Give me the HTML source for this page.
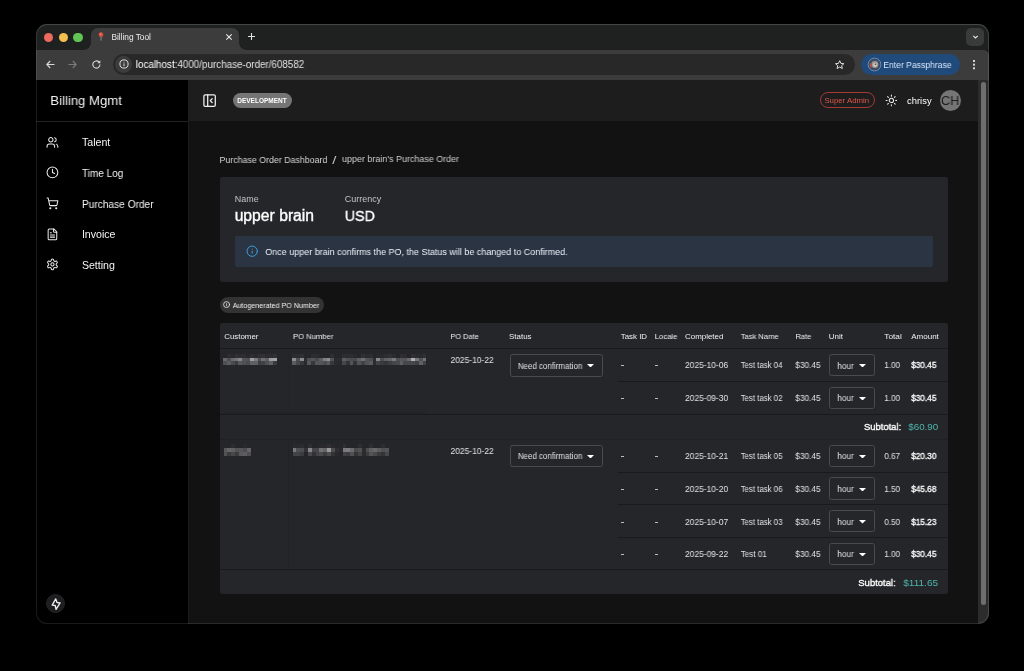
<!DOCTYPE html>
<html><head><meta charset="utf-8"><title>Billing Tool</title>
<style>
*{box-sizing:border-box;margin:0;padding:0}
html,body{width:1024px;height:671px;background:#000;overflow:hidden;font-family:"Liberation Sans",sans-serif;color:#fff}
.abs{position:absolute}
#win{position:absolute;left:35.5px;top:23.8px;width:953.5px;height:600.4px;border-radius:11px;background:#121212;overflow:hidden}
#winborder{position:absolute;left:35.5px;top:23.8px;width:953.5px;height:600.4px;border-radius:11px;border:1.3px solid rgba(255,255,255,.1);border-top-color:rgba(255,255,255,.17);border-right-color:rgba(255,255,255,.14);pointer-events:none}
#tab{position:absolute;left:55.5px;top:4.2px;width:148px;height:22px;background:#3c3c3c;border-radius:7px 7px 0 0}
#tab:before,#tab:after{content:"";position:absolute;bottom:0;width:7px;height:7px;background:radial-gradient(circle at 0 0,transparent 6.5px,#3c3c3c 7px)}
#tab:before{left:-7px}
#tab:after{right:-7px;background:radial-gradient(circle at 100% 0,transparent 6.5px,#3c3c3c 7px)}
.t{position:absolute;white-space:nowrap;line-height:1;transform-origin:0 0;will-change:transform}
</style></head><body>
<div id="win">

<div class="abs" style="left:-0.5px;top:-0.8px;width:955px;height:27px;background:#1f2120;"></div>
<div class="abs" style="left:-0.5px;top:26.2px;width:954px;height:29.6px;background:#3c3c3c;border-radius:0 5px 0 0"></div>
<div class="abs" style="left:8.5px;top:8.85px;width:9.3px;height:9.3px;background:#ed6a5e;border-radius:50%"></div>
<div class="abs" style="left:23.15px;top:8.85px;width:9.3px;height:9.3px;background:#f4bf4f;border-radius:50%"></div>
<div class="abs" style="left:37.75px;top:8.85px;width:9.3px;height:9.3px;background:#61c554;border-radius:50%"></div>
<div id="tab"></div>
<svg class="abs" style="left:62.3px;top:8.6px" width="6" height="9" viewBox="0 0 6 9"><rect x="2.6" y="4" width="0.9" height="4.6" fill="#8a9aa3"/><circle cx="3" cy="2.7" r="2.35" fill="#d9513e"/><circle cx="2.4" cy="2.1" r="0.8" fill="#ee8a78"/></svg>
<svg class="abs" style="left:189.5px;top:9.2px" width="8" height="8" viewBox="0 0 8 8"><path d="M1.3 1.3 L6.7 6.7 M6.7 1.3 L1.3 6.7" stroke="#e8e8e8" stroke-width="1.1" fill="none"/></svg>
<svg class="abs" style="left:211.5px;top:8.2px" width="9" height="9" viewBox="0 0 9 9"><path d="M4.5 1 V8 M1 4.5 H8" stroke="#e0e0e0" stroke-width="1.1" fill="none"/></svg>
<div class="abs" style="left:930.5px;top:4.2px;width:18.0px;height:18px;background:#3a3a3a;border-radius:5px"></div>
<svg class="abs" style="left:935.0px;top:9.2px" width="9" height="8" viewBox="0 0 9 8"><path d="M2.3 2.8 L4.5 5.0 L6.7 2.8" stroke="#e8e8e8" stroke-width="1.15" fill="none"/></svg>
<div class="abs" style="left:77.5px;top:30.2px;width:742px;height:21px;background:#282828;border-radius:11px"></div>
<svg class="abs" style="left:9.5px;top:35.2px" width="11" height="11" viewBox="0 0 11 11"><path d="M9.5 5.5 H2 M5.2 2 L1.8 5.5 L5.2 9" stroke="#d8d8d8" stroke-width="1.1" fill="none"/></svg>
<svg class="abs" style="left:31.5px;top:35.2px" width="11" height="11" viewBox="0 0 11 11"><path d="M1.5 5.5 H9 M5.8 2 L9.2 5.5 L5.8 9" stroke="#7c7c7c" stroke-width="1.1" fill="none"/></svg>
<svg class="abs" style="left:55.1px;top:35.3px" width="11" height="11" viewBox="0 0 11 11"><path d="M9 5.5 A3.6 3.6 0 1 1 7.9 2.9" stroke="#d8d8d8" stroke-width="1.1" fill="none"/><path d="M9.3 1.3 V4.2 H6.4 Z" fill="#d8d8d8"/></svg>
<div class="abs" style="left:79.5px;top:32.2px;width:17px;height:17px;background:#3c3c3c;border-radius:50%"></div>
<svg class="abs" style="left:83.0px;top:35.7px" width="10" height="10" viewBox="0 0 10 10"><circle cx="5" cy="5" r="4.1" stroke="#e8e8e8" stroke-width="0.95" fill="none"/><path d="M5 4.4 V7.2 M5 2.8 V3.6" stroke="#e8e8e8" stroke-width="0.9"/></svg>
<svg class="abs" style="left:798.9px;top:35.2px" width="11.4" height="11.4" viewBox="0 0 24 24"><path d="M12 3.6 L14.6 9.3 L20.8 9.9 L16.1 14 L17.5 20.1 L12 16.9 L6.5 20.1 L7.9 14 L3.2 9.9 L9.4 9.3 Z" stroke="#e8e8e8" stroke-width="2" fill="none" stroke-linejoin="round"/></svg>
<div class="abs" style="left:825.5px;top:29.9px;width:98.8px;height:21.6px;background:#1f4a7a;border-radius:11px"></div>
<svg class="abs" style="left:831.0px;top:33.2px" width="15" height="15" viewBox="-7.5 -7.5 15 15"><circle r="6.4" fill="none" stroke="#8ea6c6" stroke-width="0.7"/><circle r="5.2" fill="#4a4d55"/><circle cx="0.4" cy="0" r="3.4" fill="#9a9a9c"/><circle cx="0.6" cy="0.3" r="1.9" fill="#d8d6d4"/><path d="M-4.6,-1.8 A5 5 0 0 0 -3.6,3.4 L-2.2,1.8 A3 3 0 0 1 -2.8,-1 Z" fill="#b4513f"/><circle cx="1" cy="-0.2" r="0.9" fill="#55585f"/></svg>
<div class="abs" style="left:937.4px;top:36.2px;width:2.2px;height:2px;background:#d4d4d4;box-shadow:0 3.65px 0 #d4d4d4,0 7.3px 0 #d4d4d4"></div>
<div class="abs" style="left:-0.5px;top:55.8px;width:955px;height:545.4px;background:#121212;"></div>
<div class="abs" style="left:-0.5px;top:55.8px;width:153.6px;height:545.4px;background:#000;border-right:1px solid #1c1c1c"></div>
<div class="abs" style="left:-0.5px;top:96.9px;width:153px;height:1.0px;background:#222222;"></div>
<div class="abs" style="left:153.1px;top:55.8px;width:789.4px;height:41.4px;background:#1d1d1d;"></div>
<div class="abs" style="left:942.1px;top:55.8px;width:12.4px;height:545.4px;background:#2c2c2c;"></div>
<div class="abs" style="left:945.5px;top:58.2px;width:5.2px;height:523.4px;background:#6e6e6e;border-radius:3px"></div>
<svg class="abs" style="left:10.600000000000001px;top:111.89999999999999px" width="12.9" height="12.9" viewBox="0 0 24 24" fill="none" stroke="#ececec" stroke-width="1.9" stroke-linecap="round" stroke-linejoin="round"><path d="M16 21v-2a4 4 0 0 0-4-4H6a4 4 0 0 0-4 4v2"/><circle cx="9" cy="7" r="4"/><path d="M22 21v-2a4 4 0 0 0-3-3.87"/><path d="M16 3.13a4 4 0 0 1 0 7.75"/></svg>
<svg class="abs" style="left:10.600000000000001px;top:142.6px" width="12.9" height="12.9" viewBox="0 0 24 24" fill="none" stroke="#ececec" stroke-width="1.9" stroke-linecap="round" stroke-linejoin="round"><circle cx="12" cy="12" r="10"/><polyline points="12 6 12 12 16 14"/></svg>
<svg class="abs" style="left:10.600000000000001px;top:173.2px" width="12.9" height="12.9" viewBox="0 0 24 24" fill="none" stroke="#ececec" stroke-width="1.9" stroke-linecap="round" stroke-linejoin="round"><circle cx="8" cy="21" r="1"/><circle cx="19" cy="21" r="1"/><path d="M2.05 2.05h2l2.66 12.42a2 2 0 0 0 2 1.58h9.78a2 2 0 0 0 1.95-1.57l1.65-7.43H5.12"/></svg>
<svg class="abs" style="left:10.600000000000001px;top:203.89999999999998px" width="12.9" height="12.9" viewBox="0 0 24 24" fill="none" stroke="#ececec" stroke-width="1.9" stroke-linecap="round" stroke-linejoin="round"><path d="M15 2H6a2 2 0 0 0-2 2v16a2 2 0 0 0 2 2h12a2 2 0 0 0 2-2V7Z"/><path d="M14 2v4a2 2 0 0 0 2 2h4"/><path d="M10 9H8"/><path d="M16 13H8"/><path d="M16 17H8"/></svg>
<svg class="abs" style="left:10.600000000000001px;top:234.5px" width="12.9" height="12.9" viewBox="0 0 24 24" fill="none" stroke="#ececec" stroke-width="1.9" stroke-linecap="round" stroke-linejoin="round"><path d="M12.22 2h-.44a2 2 0 0 0-2 2v.18a2 2 0 0 1-1 1.73l-.43.25a2 2 0 0 1-2 0l-.15-.08a2 2 0 0 0-2.73.73l-.22.38a2 2 0 0 0 .73 2.73l.15.1a2 2 0 0 1 1 1.72v.51a2 2 0 0 1-1 1.74l-.15.09a2 2 0 0 0-.73 2.73l.22.38a2 2 0 0 0 2.73.73l.15-.08a2 2 0 0 1 2 0l.43.25a2 2 0 0 1 1 1.73V20a2 2 0 0 0 2 2h.44a2 2 0 0 0 2-2v-.18a2 2 0 0 1 1-1.73l.43-.25a2 2 0 0 1 2 0l.15.08a2 2 0 0 0 2.73-.73l.22-.39a2 2 0 0 0-.73-2.73l-.15-.08a2 2 0 0 1-1-1.74v-.5a2 2 0 0 1 1-1.74l.15-.09a2 2 0 0 0 .73-2.73l-.22-.38a2 2 0 0 0-2.73-.73l-.15.08a2 2 0 0 1-2 0l-.43-.25a2 2 0 0 1-1-1.73V4a2 2 0 0 0-2-2z"/><circle cx="12" cy="12" r="3"/></svg>
<div class="abs" style="left:10.4px;top:570.2px;width:19.4px;height:19.4px;background:#1e1e20;border-radius:50%;border:1px solid #262628"></div>
<svg class="abs" style="left:13.100000000000001px;top:572.9000000000001px" width="14" height="14" viewBox="-7 -7 14 14" fill="none" stroke="#ececec" stroke-width="1.35" stroke-linejoin="round"><path d="M-0.25,-5.1 L-3.8,1.2 L-0.8,1.5 L0.05,5.4 L4.1,-1.2 L1.0,-1.5 Z"/></svg>
<svg class="abs" style="left:166.4px;top:68.9px" width="15.2" height="15.2" viewBox="0 0 24 24" fill="none" stroke="#f0f0f0" stroke-width="2" stroke-linecap="round" stroke-linejoin="round"><rect width="18" height="18" x="3" y="3" rx="2"/><path d="M9 3v18"/><path d="m16 15-3-3 3-3"/></svg>
<div class="abs" style="left:197.0px;top:68.8px;width:59.5px;height:15.4px;background:#757575;border-radius:8px"></div>
<div class="abs" style="left:784.5px;top:68.7px;width:55px;height:15.5px;background:transparent;border-radius:8px;border:1px solid #a13b34"></div>
<svg class="abs" style="left:849.0px;top:70.0px" width="12.8" height="12.8" viewBox="0 0 24 24" fill="none" stroke="#f0f0f0" stroke-width="1.9" stroke-linecap="round" stroke-linejoin="round"><circle cx="12" cy="12" r="4"/><path d="M12 2v2"/><path d="M12 20v2"/><path d="m4.93 4.93 1.41 1.41"/><path d="m17.66 17.66 1.41 1.41"/><path d="M2 12h2"/><path d="M20 12h2"/><path d="m6.340 17.66-1.41 1.41"/><path d="m19.07 4.930-1.41 1.41"/></svg>
<div class="abs" style="left:904.0px;top:66.2px;width:21.0px;height:21px;background:#757575;border-radius:50%"></div>
<div class="abs" style="left:184.5px;top:153.2px;width:728px;height:105px;background:#25262a;border-radius:2px"></div>
<div class="abs" style="left:199.8px;top:212.4px;width:697.7px;height:30.4px;background:#2a3443;border-radius:2px"></div>
<svg class="abs" style="left:210.1px;top:221.2px" width="12.4" height="12.4" viewBox="0 0 24 24" fill="none" stroke="#3f9fe0" stroke-width="1.9" stroke-linecap="round" stroke-linejoin="round"><circle cx="12" cy="12" r="10"/><path d="M12 16v-4"/><path d="M12 8h.01"/></svg>
<div class="abs" style="left:184.5px;top:273.5px;width:104px;height:15.5px;background:#333333;border-radius:8px"></div>
<svg class="abs" style="left:187.1px;top:277.7px" width="7.2" height="7.2" viewBox="0 0 24 24" fill="none" stroke="#eee" stroke-width="2.6" stroke-linecap="round" stroke-linejoin="round"><circle cx="12" cy="12" r="10"/><path d="M12 16v-4"/><path d="M12 8h.01"/></svg>
<div class="abs" style="left:184.5px;top:299.2px;width:728px;height:271px;background:#25262a;border-radius:2px"></div>
<div class="abs" style="left:184.5px;top:324.2px;width:728px;height:1.0px;background:#191a1c;"></div>
<div class="abs" style="left:585.8px;top:341.5px;width:2.6px;height:0.8px;background:#bdbdbd;"></div>
<div class="abs" style="left:619.8px;top:341.5px;width:2.6px;height:0.8px;background:#bdbdbd;"></div>
<div class="abs" style="left:793.7px;top:330.0px;width:45.5px;height:22.4px;background:transparent;border:1px solid #4a4b50;border-radius:2.5px"></div>
<svg class="abs" style="left:823.3px;top:340.1px" width="7" height="3.5" viewBox="0 0 7 3.5"><path d="M0 0 H7 L3.5 3.5 Z" fill="#fff"/></svg>
<div class="abs" style="left:582.5px;top:357.0px;width:330px;height:1.0px;background:#191a1c;"></div>
<div class="abs" style="left:585.8px;top:374.25px;width:2.6px;height:0.8px;background:#bdbdbd;"></div>
<div class="abs" style="left:619.8px;top:374.25px;width:2.6px;height:0.8px;background:#bdbdbd;"></div>
<div class="abs" style="left:793.7px;top:362.75px;width:45.5px;height:22.4px;background:transparent;border:1px solid #4a4b50;border-radius:2.5px"></div>
<svg class="abs" style="left:823.3px;top:372.85px" width="7" height="3.5" viewBox="0 0 7 3.5"><path d="M0 0 H7 L3.5 3.5 Z" fill="#fff"/></svg>
<div class="abs" style="left:585.8px;top:432.4px;width:2.6px;height:0.8px;background:#bdbdbd;"></div>
<div class="abs" style="left:619.8px;top:432.4px;width:2.6px;height:0.8px;background:#bdbdbd;"></div>
<div class="abs" style="left:793.7px;top:420.9px;width:45.5px;height:22.4px;background:transparent;border:1px solid #4a4b50;border-radius:2.5px"></div>
<svg class="abs" style="left:823.3px;top:431.0px" width="7" height="3.5" viewBox="0 0 7 3.5"><path d="M0 0 H7 L3.5 3.5 Z" fill="#fff"/></svg>
<div class="abs" style="left:582.5px;top:448.0px;width:330px;height:1.0px;background:#191a1c;"></div>
<div class="abs" style="left:585.8px;top:465.15px;width:2.6px;height:0.8px;background:#bdbdbd;"></div>
<div class="abs" style="left:619.8px;top:465.15px;width:2.6px;height:0.8px;background:#bdbdbd;"></div>
<div class="abs" style="left:793.7px;top:453.65px;width:45.5px;height:22.4px;background:transparent;border:1px solid #4a4b50;border-radius:2.5px"></div>
<svg class="abs" style="left:823.3px;top:463.75px" width="7" height="3.5" viewBox="0 0 7 3.5"><path d="M0 0 H7 L3.5 3.5 Z" fill="#fff"/></svg>
<div class="abs" style="left:582.5px;top:480.7px;width:330px;height:1.0px;background:#191a1c;"></div>
<div class="abs" style="left:585.8px;top:497.75px;width:2.6px;height:0.8px;background:#bdbdbd;"></div>
<div class="abs" style="left:619.8px;top:497.75px;width:2.6px;height:0.8px;background:#bdbdbd;"></div>
<div class="abs" style="left:793.7px;top:486.25px;width:45.5px;height:22.4px;background:transparent;border:1px solid #4a4b50;border-radius:2.5px"></div>
<svg class="abs" style="left:823.3px;top:496.34999999999997px" width="7" height="3.5" viewBox="0 0 7 3.5"><path d="M0 0 H7 L3.5 3.5 Z" fill="#fff"/></svg>
<div class="abs" style="left:582.5px;top:513.2px;width:330px;height:1.0px;background:#191a1c;"></div>
<div class="abs" style="left:585.8px;top:530.25px;width:2.6px;height:0.8px;background:#bdbdbd;"></div>
<div class="abs" style="left:619.8px;top:530.25px;width:2.6px;height:0.8px;background:#bdbdbd;"></div>
<div class="abs" style="left:793.7px;top:518.75px;width:45.5px;height:22.4px;background:transparent;border:1px solid #4a4b50;border-radius:2.5px"></div>
<svg class="abs" style="left:823.3px;top:528.85px" width="7" height="3.5" viewBox="0 0 7 3.5"><path d="M0 0 H7 L3.5 3.5 Z" fill="#fff"/></svg>
<div class="abs" style="left:184.5px;top:390.0px;width:728px;height:1.0px;background:#191a1c;"></div>
<div class="abs" style="left:184.5px;top:415.1px;width:728px;height:1.0px;background:#202125;"></div>
<div class="abs" style="left:184.5px;top:545.7px;width:728px;height:1.0px;background:#191a1c;"></div>
<div class="abs" style="left:474.4px;top:330.4px;width:92.8px;height:22.4px;background:transparent;border:1px solid #4a4b50;border-radius:2.5px"></div>
<svg class="abs" style="left:551.9px;top:340.2px" width="7" height="3.5" viewBox="0 0 7 3.5"><path d="M0 0 H7 L3.5 3.5 Z" fill="#fff"/></svg>
<div class="abs" style="left:474.4px;top:421.2px;width:92.8px;height:22.4px;background:transparent;border:1px solid #4a4b50;border-radius:2.5px"></div>
<svg class="abs" style="left:551.9px;top:431.0px" width="7" height="3.5" viewBox="0 0 7 3.5"><path d="M0 0 H7 L3.5 3.5 Z" fill="#fff"/></svg>
<svg class="abs" style="left:0.5px;top:0.2px" width="952" height="599" shape-rendering="crispEdges"><rect x="187.00" y="333.59" width="3.89" height="3.89" fill="rgb(103,103,106)"/><rect x="187.00" y="337.43" width="3.89" height="3.89" fill="rgb(80,80,83)"/><rect x="190.84" y="329.75" width="3.89" height="3.89" fill="rgb(45,45,48)"/><rect x="190.84" y="333.59" width="3.89" height="3.89" fill="rgb(78,78,81)"/><rect x="190.84" y="337.43" width="3.89" height="3.89" fill="rgb(92,92,95)"/><rect x="194.68" y="329.75" width="3.89" height="3.89" fill="rgb(41,41,44)"/><rect x="194.68" y="333.59" width="3.89" height="3.89" fill="rgb(107,107,110)"/><rect x="194.68" y="337.43" width="3.89" height="3.89" fill="rgb(74,74,77)"/><rect x="198.52" y="329.75" width="3.89" height="3.89" fill="rgb(48,48,51)"/><rect x="198.52" y="333.59" width="3.89" height="3.89" fill="rgb(116,116,119)"/><rect x="198.52" y="337.43" width="3.89" height="3.89" fill="rgb(59,59,62)"/><rect x="202.36" y="329.75" width="3.89" height="3.89" fill="rgb(45,45,48)"/><rect x="202.36" y="333.59" width="3.89" height="3.89" fill="rgb(134,134,137)"/><rect x="202.36" y="337.43" width="3.89" height="3.89" fill="rgb(87,87,90)"/><rect x="206.20" y="329.75" width="3.89" height="3.89" fill="rgb(46,46,49)"/><rect x="206.20" y="333.59" width="3.89" height="3.89" fill="rgb(84,84,87)"/><rect x="206.20" y="337.43" width="3.89" height="3.89" fill="rgb(80,80,83)"/><rect x="210.04" y="329.75" width="3.89" height="3.89" fill="rgb(41,41,44)"/><rect x="210.04" y="333.59" width="3.89" height="3.89" fill="rgb(81,81,84)"/><rect x="210.04" y="337.43" width="3.89" height="3.89" fill="rgb(74,74,77)"/><rect x="213.88" y="329.75" width="3.89" height="3.89" fill="rgb(46,46,49)"/><rect x="213.88" y="333.59" width="3.89" height="3.89" fill="rgb(156,156,159)"/><rect x="213.88" y="337.43" width="3.89" height="3.89" fill="rgb(96,96,99)"/><rect x="217.72" y="329.75" width="3.89" height="3.89" fill="rgb(42,42,45)"/><rect x="217.72" y="333.59" width="3.89" height="3.89" fill="rgb(122,122,125)"/><rect x="217.72" y="337.43" width="3.89" height="3.89" fill="rgb(96,96,99)"/><rect x="221.56" y="329.75" width="3.89" height="3.89" fill="rgb(48,48,51)"/><rect x="221.56" y="333.59" width="3.89" height="3.89" fill="rgb(79,79,82)"/><rect x="221.56" y="337.43" width="3.89" height="3.89" fill="rgb(62,62,65)"/><rect x="225.40" y="329.75" width="3.89" height="3.89" fill="rgb(49,49,52)"/><rect x="225.40" y="333.59" width="3.89" height="3.89" fill="rgb(112,112,115)"/><rect x="225.40" y="337.43" width="3.89" height="3.89" fill="rgb(66,66,69)"/><rect x="229.24" y="329.75" width="3.89" height="3.89" fill="rgb(44,44,47)"/><rect x="229.24" y="333.59" width="3.89" height="3.89" fill="rgb(94,94,97)"/><rect x="229.24" y="337.43" width="3.89" height="3.89" fill="rgb(80,80,83)"/><rect x="233.08" y="329.75" width="3.89" height="3.89" fill="rgb(45,45,48)"/><rect x="233.08" y="333.59" width="3.89" height="3.89" fill="rgb(155,155,158)"/><rect x="233.08" y="337.43" width="3.89" height="3.89" fill="rgb(96,96,99)"/><rect x="236.92" y="329.75" width="3.89" height="3.89" fill="rgb(48,48,51)"/><rect x="236.92" y="333.59" width="3.89" height="3.89" fill="rgb(161,161,164)"/><rect x="236.92" y="337.43" width="3.89" height="3.89" fill="rgb(59,59,62)"/><rect x="256.00" y="329.75" width="3.89" height="3.89" fill="rgb(44,44,47)"/><rect x="256.00" y="333.59" width="3.89" height="3.89" fill="rgb(140,140,143)"/><rect x="256.00" y="337.43" width="3.89" height="3.89" fill="rgb(91,91,94)"/><rect x="259.84" y="329.75" width="3.89" height="3.89" fill="rgb(45,45,48)"/><rect x="259.84" y="333.59" width="3.89" height="3.89" fill="rgb(77,77,80)"/><rect x="259.84" y="337.43" width="3.89" height="3.89" fill="rgb(70,70,73)"/><rect x="263.68" y="329.75" width="3.89" height="3.89" fill="rgb(48,48,51)"/><rect x="263.68" y="333.59" width="3.89" height="3.89" fill="rgb(139,139,142)"/><rect x="263.68" y="337.43" width="3.89" height="3.89" fill="rgb(55,55,58)"/><rect x="267.52" y="333.59" width="3.89" height="3.89" fill="rgb(44,44,47)"/><rect x="267.52" y="337.43" width="3.89" height="3.89" fill="rgb(42,42,45)"/><rect x="271.36" y="333.59" width="3.89" height="3.89" fill="rgb(78,78,81)"/><rect x="271.36" y="337.43" width="3.89" height="3.89" fill="rgb(87,87,90)"/><rect x="275.20" y="329.75" width="3.89" height="3.89" fill="rgb(45,45,48)"/><rect x="275.20" y="333.59" width="3.89" height="3.89" fill="rgb(85,85,88)"/><rect x="275.20" y="337.43" width="3.89" height="3.89" fill="rgb(55,55,58)"/><rect x="279.04" y="329.75" width="3.89" height="3.89" fill="rgb(44,44,47)"/><rect x="279.04" y="333.59" width="3.89" height="3.89" fill="rgb(72,72,75)"/><rect x="279.04" y="337.43" width="3.89" height="3.89" fill="rgb(85,85,88)"/><rect x="282.88" y="333.59" width="3.89" height="3.89" fill="rgb(94,94,97)"/><rect x="282.88" y="337.43" width="3.89" height="3.89" fill="rgb(85,85,88)"/><rect x="286.72" y="333.59" width="3.89" height="3.89" fill="rgb(127,127,130)"/><rect x="286.72" y="337.43" width="3.89" height="3.89" fill="rgb(77,77,80)"/><rect x="290.56" y="333.59" width="3.89" height="3.89" fill="rgb(141,141,144)"/><rect x="290.56" y="337.43" width="3.89" height="3.89" fill="rgb(89,89,92)"/><rect x="294.40" y="329.75" width="3.89" height="3.89" fill="rgb(47,47,50)"/><rect x="294.40" y="333.59" width="3.89" height="3.89" fill="rgb(83,83,86)"/><rect x="294.40" y="337.43" width="3.89" height="3.89" fill="rgb(56,56,59)"/><rect x="298.24" y="333.59" width="3.89" height="3.89" fill="rgb(43,43,46)"/><rect x="298.24" y="337.43" width="3.89" height="3.89" fill="rgb(43,43,46)"/><rect x="302.08" y="333.59" width="3.89" height="3.89" fill="rgb(46,46,49)"/><rect x="302.08" y="337.43" width="3.89" height="3.89" fill="rgb(41,41,44)"/><rect x="305.92" y="329.75" width="3.89" height="3.89" fill="rgb(46,46,49)"/><rect x="305.92" y="333.59" width="3.89" height="3.89" fill="rgb(91,91,94)"/><rect x="305.92" y="337.43" width="3.89" height="3.89" fill="rgb(71,71,74)"/><rect x="309.76" y="329.75" width="3.89" height="3.89" fill="rgb(45,45,48)"/><rect x="309.76" y="333.59" width="3.89" height="3.89" fill="rgb(80,80,83)"/><rect x="309.76" y="337.43" width="3.89" height="3.89" fill="rgb(51,51,54)"/><rect x="313.60" y="329.75" width="3.89" height="3.89" fill="rgb(46,46,49)"/><rect x="313.60" y="333.59" width="3.89" height="3.89" fill="rgb(75,75,78)"/><rect x="313.60" y="337.43" width="3.89" height="3.89" fill="rgb(84,84,87)"/><rect x="317.44" y="329.75" width="3.89" height="3.89" fill="rgb(41,41,44)"/><rect x="317.44" y="333.59" width="3.89" height="3.89" fill="rgb(74,74,77)"/><rect x="317.44" y="337.43" width="3.89" height="3.89" fill="rgb(52,52,55)"/><rect x="321.28" y="333.59" width="3.89" height="3.89" fill="rgb(95,95,98)"/><rect x="321.28" y="337.43" width="3.89" height="3.89" fill="rgb(83,83,86)"/><rect x="325.12" y="329.75" width="3.89" height="3.89" fill="rgb(48,48,51)"/><rect x="325.12" y="333.59" width="3.89" height="3.89" fill="rgb(110,110,113)"/><rect x="325.12" y="337.43" width="3.89" height="3.89" fill="rgb(65,65,68)"/><rect x="328.96" y="329.75" width="3.89" height="3.89" fill="rgb(43,43,46)"/><rect x="328.96" y="333.59" width="3.89" height="3.89" fill="rgb(83,83,86)"/><rect x="328.96" y="337.43" width="3.89" height="3.89" fill="rgb(82,82,85)"/><rect x="332.80" y="329.75" width="3.89" height="3.89" fill="rgb(46,46,49)"/><rect x="332.80" y="333.59" width="3.89" height="3.89" fill="rgb(77,77,80)"/><rect x="332.80" y="337.43" width="3.89" height="3.89" fill="rgb(91,91,94)"/><rect x="336.64" y="333.59" width="3.89" height="3.89" fill="rgb(45,45,48)"/><rect x="336.64" y="337.43" width="3.89" height="3.89" fill="rgb(44,44,47)"/><rect x="340.48" y="329.75" width="3.89" height="3.89" fill="rgb(41,41,44)"/><rect x="340.48" y="333.59" width="3.89" height="3.89" fill="rgb(135,135,138)"/><rect x="340.48" y="337.43" width="3.89" height="3.89" fill="rgb(65,65,68)"/><rect x="344.32" y="329.75" width="3.89" height="3.89" fill="rgb(41,41,44)"/><rect x="344.32" y="333.59" width="3.89" height="3.89" fill="rgb(77,77,80)"/><rect x="344.32" y="337.43" width="3.89" height="3.89" fill="rgb(58,58,61)"/><rect x="348.16" y="329.75" width="3.89" height="3.89" fill="rgb(45,45,48)"/><rect x="348.16" y="333.59" width="3.89" height="3.89" fill="rgb(95,95,98)"/><rect x="348.16" y="337.43" width="3.89" height="3.89" fill="rgb(53,53,56)"/><rect x="352.00" y="329.75" width="3.89" height="3.89" fill="rgb(49,49,52)"/><rect x="352.00" y="333.59" width="3.89" height="3.89" fill="rgb(101,101,104)"/><rect x="352.00" y="337.43" width="3.89" height="3.89" fill="rgb(62,62,65)"/><rect x="355.84" y="329.75" width="3.89" height="3.89" fill="rgb(44,44,47)"/><rect x="355.84" y="333.59" width="3.89" height="3.89" fill="rgb(120,120,123)"/><rect x="355.84" y="337.43" width="3.89" height="3.89" fill="rgb(70,70,73)"/><rect x="359.68" y="333.59" width="3.89" height="3.89" fill="rgb(79,79,82)"/><rect x="359.68" y="337.43" width="3.89" height="3.89" fill="rgb(73,73,76)"/><rect x="363.52" y="329.75" width="3.89" height="3.89" fill="rgb(47,47,50)"/><rect x="363.52" y="333.59" width="3.89" height="3.89" fill="rgb(87,87,90)"/><rect x="363.52" y="337.43" width="3.89" height="3.89" fill="rgb(94,94,97)"/><rect x="367.36" y="329.75" width="3.89" height="3.89" fill="rgb(45,45,48)"/><rect x="367.36" y="333.59" width="3.89" height="3.89" fill="rgb(85,85,88)"/><rect x="367.36" y="337.43" width="3.89" height="3.89" fill="rgb(71,71,74)"/><rect x="371.20" y="333.59" width="3.89" height="3.89" fill="rgb(105,105,108)"/><rect x="371.20" y="337.43" width="3.89" height="3.89" fill="rgb(71,71,74)"/><rect x="375.04" y="329.75" width="3.89" height="3.89" fill="rgb(49,49,52)"/><rect x="375.04" y="333.59" width="3.89" height="3.89" fill="rgb(174,174,177)"/><rect x="375.04" y="337.43" width="3.89" height="3.89" fill="rgb(71,71,74)"/><rect x="378.88" y="329.75" width="3.89" height="3.89" fill="rgb(43,43,46)"/><rect x="378.88" y="333.59" width="3.89" height="3.89" fill="rgb(117,117,120)"/><rect x="378.88" y="337.43" width="3.89" height="3.89" fill="rgb(64,64,67)"/><rect x="382.72" y="329.75" width="3.89" height="3.89" fill="rgb(42,42,45)"/><rect x="382.72" y="333.59" width="3.89" height="3.89" fill="rgb(82,82,85)"/><rect x="382.72" y="337.43" width="3.89" height="3.89" fill="rgb(96,96,99)"/><rect x="386.56" y="329.75" width="3.89" height="3.89" fill="rgb(48,48,51)"/><rect x="386.56" y="333.59" width="3.89" height="3.89" fill="rgb(113,113,116)"/><rect x="386.56" y="337.43" width="3.89" height="3.89" fill="rgb(66,66,69)"/><rect x="187.60" y="424.14" width="3.89" height="3.89" fill="rgb(87,87,90)"/><rect x="187.60" y="427.98" width="3.89" height="3.89" fill="rgb(81,81,84)"/><rect x="191.44" y="424.14" width="3.89" height="3.89" fill="rgb(101,101,104)"/><rect x="191.44" y="427.98" width="3.89" height="3.89" fill="rgb(59,59,62)"/><rect x="195.28" y="420.30" width="3.89" height="3.89" fill="rgb(44,44,47)"/><rect x="195.28" y="424.14" width="3.89" height="3.89" fill="rgb(97,97,100)"/><rect x="195.28" y="427.98" width="3.89" height="3.89" fill="rgb(71,71,74)"/><rect x="199.12" y="424.14" width="3.89" height="3.89" fill="rgb(82,82,85)"/><rect x="199.12" y="427.98" width="3.89" height="3.89" fill="rgb(60,60,63)"/><rect x="202.96" y="424.14" width="3.89" height="3.89" fill="rgb(86,86,89)"/><rect x="202.96" y="427.98" width="3.89" height="3.89" fill="rgb(89,89,92)"/><rect x="206.80" y="420.30" width="3.89" height="3.89" fill="rgb(42,42,45)"/><rect x="206.80" y="424.14" width="3.89" height="3.89" fill="rgb(77,77,80)"/><rect x="206.80" y="427.98" width="3.89" height="3.89" fill="rgb(93,93,96)"/><rect x="210.64" y="424.14" width="3.89" height="3.89" fill="rgb(100,100,103)"/><rect x="210.64" y="427.98" width="3.89" height="3.89" fill="rgb(79,79,82)"/><rect x="256.60" y="420.30" width="3.89" height="3.89" fill="rgb(42,42,45)"/><rect x="256.60" y="424.14" width="3.89" height="3.89" fill="rgb(121,121,124)"/><rect x="256.60" y="427.98" width="3.89" height="3.89" fill="rgb(67,67,70)"/><rect x="260.44" y="420.30" width="3.89" height="3.89" fill="rgb(42,42,45)"/><rect x="260.44" y="424.14" width="3.89" height="3.89" fill="rgb(80,80,83)"/><rect x="260.44" y="427.98" width="3.89" height="3.89" fill="rgb(68,68,71)"/><rect x="264.28" y="420.30" width="3.89" height="3.89" fill="rgb(44,44,47)"/><rect x="264.28" y="424.14" width="3.89" height="3.89" fill="rgb(77,77,80)"/><rect x="264.28" y="427.98" width="3.89" height="3.89" fill="rgb(60,60,63)"/><rect x="268.12" y="424.14" width="3.89" height="3.89" fill="rgb(51,51,54)"/><rect x="271.96" y="420.30" width="3.89" height="3.89" fill="rgb(47,47,50)"/><rect x="271.96" y="424.14" width="3.89" height="3.89" fill="rgb(133,133,136)"/><rect x="271.96" y="427.98" width="3.89" height="3.89" fill="rgb(72,72,75)"/><rect x="275.80" y="424.14" width="3.89" height="3.89" fill="rgb(70,70,73)"/><rect x="275.80" y="427.98" width="3.89" height="3.89" fill="rgb(51,51,54)"/><rect x="279.64" y="424.14" width="3.89" height="3.89" fill="rgb(70,70,73)"/><rect x="279.64" y="427.98" width="3.89" height="3.89" fill="rgb(67,67,70)"/><rect x="283.48" y="420.30" width="3.89" height="3.89" fill="rgb(42,42,45)"/><rect x="283.48" y="424.14" width="3.89" height="3.89" fill="rgb(113,113,116)"/><rect x="283.48" y="427.98" width="3.89" height="3.89" fill="rgb(73,73,76)"/><rect x="287.32" y="420.30" width="3.89" height="3.89" fill="rgb(42,42,45)"/><rect x="287.32" y="424.14" width="3.89" height="3.89" fill="rgb(100,100,103)"/><rect x="287.32" y="427.98" width="3.89" height="3.89" fill="rgb(59,59,62)"/><rect x="291.16" y="420.30" width="3.89" height="3.89" fill="rgb(47,47,50)"/><rect x="291.16" y="424.14" width="3.89" height="3.89" fill="rgb(153,153,156)"/><rect x="291.16" y="427.98" width="3.89" height="3.89" fill="rgb(76,76,79)"/><rect x="295.00" y="420.30" width="3.89" height="3.89" fill="rgb(41,41,44)"/><rect x="295.00" y="424.14" width="3.89" height="3.89" fill="rgb(76,76,79)"/><rect x="295.00" y="427.98" width="3.89" height="3.89" fill="rgb(51,51,54)"/><rect x="298.84" y="424.14" width="3.89" height="3.89" fill="rgb(47,47,50)"/><rect x="298.84" y="427.98" width="3.89" height="3.89" fill="rgb(41,41,44)"/><rect x="302.68" y="424.14" width="3.89" height="3.89" fill="rgb(42,42,45)"/><rect x="306.52" y="420.30" width="3.89" height="3.89" fill="rgb(47,47,50)"/><rect x="306.52" y="424.14" width="3.89" height="3.89" fill="rgb(120,120,123)"/><rect x="306.52" y="427.98" width="3.89" height="3.89" fill="rgb(66,66,69)"/><rect x="310.36" y="424.14" width="3.89" height="3.89" fill="rgb(124,124,127)"/><rect x="310.36" y="427.98" width="3.89" height="3.89" fill="rgb(60,60,63)"/><rect x="314.20" y="424.14" width="3.89" height="3.89" fill="rgb(106,106,109)"/><rect x="314.20" y="427.98" width="3.89" height="3.89" fill="rgb(80,80,83)"/><rect x="318.04" y="424.14" width="3.89" height="3.89" fill="rgb(74,74,77)"/><rect x="318.04" y="427.98" width="3.89" height="3.89" fill="rgb(52,52,55)"/><rect x="321.88" y="420.30" width="3.89" height="3.89" fill="rgb(46,46,49)"/><rect x="321.88" y="424.14" width="3.89" height="3.89" fill="rgb(82,82,85)"/><rect x="321.88" y="427.98" width="3.89" height="3.89" fill="rgb(68,68,71)"/><rect x="325.72" y="424.14" width="3.89" height="3.89" fill="rgb(44,44,47)"/><rect x="325.72" y="427.98" width="3.89" height="3.89" fill="rgb(43,43,46)"/><rect x="329.56" y="424.14" width="3.89" height="3.89" fill="rgb(78,78,81)"/><rect x="329.56" y="427.98" width="3.89" height="3.89" fill="rgb(59,59,62)"/><rect x="333.40" y="420.30" width="3.89" height="3.89" fill="rgb(47,47,50)"/><rect x="333.40" y="424.14" width="3.89" height="3.89" fill="rgb(94,94,97)"/><rect x="333.40" y="427.98" width="3.89" height="3.89" fill="rgb(83,83,86)"/><rect x="337.24" y="424.14" width="3.89" height="3.89" fill="rgb(103,103,106)"/><rect x="337.24" y="427.98" width="3.89" height="3.89" fill="rgb(73,73,76)"/><rect x="341.08" y="424.14" width="3.89" height="3.89" fill="rgb(91,91,94)"/><rect x="341.08" y="427.98" width="3.89" height="3.89" fill="rgb(59,59,62)"/><rect x="344.92" y="420.30" width="3.89" height="3.89" fill="rgb(45,45,48)"/><rect x="344.92" y="424.14" width="3.89" height="3.89" fill="rgb(79,79,82)"/><rect x="344.92" y="427.98" width="3.89" height="3.89" fill="rgb(52,52,55)"/><rect x="348.76" y="424.14" width="3.89" height="3.89" fill="rgb(84,84,87)"/><rect x="348.76" y="427.98" width="3.89" height="3.89" fill="rgb(72,72,75)"/></svg>
<div class="abs" style="left:187.5px;top:387.8px;width:203.5px;height:2.4px;background:#222327;"></div>
<div class="abs" style="left:252.5px;top:325.2px;width:1px;height:62.6px;background:#232428;"></div>
<div class="abs" style="left:252.5px;top:417.2px;width:1px;height:128.5px;background:#222327;"></div>
<div class="t" id="tabtitle" style="left:75.5px;top:9.2px;padding-left:0.38px;font-size:8.3px;color:#ececec;transform:scaleX(0.9886);">Billing Tool</div>
<div class="t" id="url" style="left:99.5px;top:36.2px;padding-left:0.86px;font-size:10.1px;color:#e2e2e2;transform:scaleX(0.9743);"><span style="color:#fff">localhost</span>:4000/purchase-order/608582</div>
<div class="t" id="pass" style="left:847.5px;top:37.2px;padding-left:0.33px;font-size:9.2px;color:#d9e6fb;transform:scaleX(0.9343);">Enter Passphrase</div>
<div class="t" id="brand" style="left:14.5px;top:70.2px;padding-left:0.30px;font-size:13.4px;color:#f2f2f2;transform:scaleX(0.9813);">Billing Mgmt</div>
<div class="t" id="nav0" style="left:45.5px;top:113.2px;padding-left:0.90px;font-size:10.6px;color:#f4f4f4;transform:scaleX(1.0059);">Talent</div>
<div class="t" id="nav1" style="left:45.5px;top:144.2px;padding-left:0.96px;font-size:10.6px;color:#f4f4f4;transform:scaleX(0.9467);">Time Log</div>
<div class="t" id="nav2" style="left:45.5px;top:175.2px;padding-left:0.94px;font-size:10.6px;color:#f4f4f4;transform:scaleX(0.9581);">Purchase Order</div>
<div class="t" id="nav3" style="left:45.5px;top:205.2px;padding-left:0.90px;font-size:10.6px;color:#f4f4f4;transform:scaleX(1.0021);">Invoice</div>
<div class="t" id="nav4" style="left:45.5px;top:236.2px;padding-left:0.91px;font-size:10.6px;color:#f4f4f4;transform:scaleX(0.9959);">Setting</div>
<div class="t" id="dev" style="left:201.5px;top:74.2px;padding-left:0.22px;font-size:6.4px;color:#fff;transform:scaleX(1.0176);font-weight:bold">DEVELOPMENT</div>
<div class="t" id="sa" style="left:788.5px;top:73.2px;padding-left:0.42px;font-size:7.8px;color:#e0574b;transform:scaleX(0.9993);">Super Admin</div>
<div class="t" id="usr" style="left:871.5px;top:72.2px;padding-left:0.10px;font-size:9.4px;color:#fff;transform:scaleX(0.9823);">chrisy</div>
<div class="t" id="ch" style="left:905.5px;top:70.2px;padding-left:0.02px;font-size:13.1px;color:#1d1d1d;transform:scaleX(0.9644);">CH</div>
<div class="t" id="bc1" style="left:183.5px;top:132.2px;padding-left:0.54px;font-size:9.0px;color:#d6d6d6;transform:scaleX(0.9805);">Purchase Order Dashboard</div>
<div class="t" id="bcs" style="left:296.5px;top:131.2px;padding-left:0.27px;font-size:11.2px;color:#c4c4c4;transform:scaleX(1.3173);">/</div>
<div class="t" id="bc2" style="left:306.5px;top:131.2px;padding-left:0.03px;font-size:9.0px;color:#cfcfcf;transform:scaleX(0.9944);">upper brain's Purchase Order</div>
<div class="t" id="lname" style="left:198.5px;top:171.2px;padding-left:0.82px;font-size:8.6px;color:#c4c4c4;transform:scaleX(1.0371);">Name</div>
<div class="t" id="vname" style="left:198.5px;top:184.2px;padding-left:0.63px;font-size:15.6px;color:#fff;transform:scaleX(1.0071);-webkit-text-stroke:.35px #fff">upper brain</div>
<div class="t" id="lcur" style="left:308.5px;top:171.2px;padding-left:0.82px;font-size:8.6px;color:#c4c4c4;transform:scaleX(1.0463);">Currency</div>
<div class="t" id="vcur" style="left:308.5px;top:184.2px;padding-left:0.80px;font-size:15.3px;color:#fff;transform:scaleX(0.9358);-webkit-text-stroke:.35px #fff">USD</div>
<div class="t" id="alt" style="left:229.5px;top:223.2px;padding-left:0.31px;font-size:9.4px;color:#eef3fa;transform:scaleX(0.9574);">Once upper brain confirms the PO, the Status will be changed to Confirmed.</div>
<div class="t" id="chipt" style="left:196.5px;top:278.2px;padding-left:0.67px;font-size:7.7px;color:#f0f0f0;transform:scaleX(0.9296);">Autogenerated PO Number</div>
<div class="t" id="h0" style="left:188.5px;top:309.2px;padding-left:0.21px;font-size:7.9px;color:#f0f0f0;transform:scaleX(0.9891);">Customer</div>
<div class="t" id="h1" style="left:257.5px;top:309.2px;padding-left:0.11px;font-size:7.9px;color:#f0f0f0;transform:scaleX(0.9630);">PO Number</div>
<div class="t" id="h2" style="left:414.5px;top:309.2px;padding-left:0.54px;font-size:7.9px;color:#f0f0f0;transform:scaleX(0.9328);">PO Date</div>
<div class="t" id="h3" style="left:473.5px;top:309.2px;padding-left:0.11px;font-size:7.9px;color:#f0f0f0;transform:scaleX(0.9891);">Status</div>
<div class="t" id="h4" style="left:584.5px;top:309.2px;padding-left:0.72px;font-size:7.9px;color:#f0f0f0;transform:scaleX(0.9893);">Task ID</div>
<div class="t" id="h5" style="left:618.5px;top:309.2px;padding-left:0.72px;font-size:7.9px;color:#f0f0f0;transform:scaleX(0.9771);">Locale</div>
<div class="t" id="h6" style="left:649.5px;top:309.2px;padding-left:0.01px;font-size:7.9px;color:#f0f0f0;transform:scaleX(1.0042);">Completed</div>
<div class="t" id="h7" style="left:704.5px;top:309.2px;padding-left:0.68px;font-size:7.9px;color:#f0f0f0;transform:scaleX(0.9611);">Task Name</div>
<div class="t" id="h8" style="left:759.5px;top:309.2px;padding-left:0.43px;font-size:7.9px;color:#f0f0f0;transform:scaleX(0.9526);">Rate</div>
<div class="t" id="h9" style="left:792.5px;top:309.2px;padding-left:0.80px;font-size:7.9px;color:#f0f0f0;transform:scaleX(1.0061);">Unit</div>
<div class="t" id="h10" style="left:848.5px;top:309.2px;padding-left:0.29px;font-size:7.9px;color:#f0f0f0;transform:scaleX(1.0456);">Total</div>
<div class="t" id="h11" style="left:875.5px;top:309.2px;padding-left:0.20px;font-size:7.9px;color:#f0f0f0;transform:scaleX(1.0158);">Amount</div>
<div class="t" id="c0" style="left:648.5px;top:337.2px;padding-left:0.97px;font-size:8.7px;color:#e2e2e2;transform:scaleX(0.9740);">2025-10-06</div>
<div class="t" id="n0" style="left:704.5px;top:337.2px;padding-left:0.66px;font-size:8.7px;color:#e2e2e2;transform:scaleX(0.9037);">Test task 04</div>
<div class="t" id="r0" style="left:759.5px;top:337.2px;padding-left:0.37px;font-size:8.7px;color:#e2e2e2;transform:scaleX(0.9518);">$30.45</div>
<div class="t" id="u0" style="left:801.5px;top:338.2px;padding-left:0.37px;font-size:8.5px;color:#e2e2e2;transform:scaleX(0.9685);">hour</div>
<div class="t" id="t0" style="left:848.5px;top:337.2px;padding-left:0.26px;font-size:8.7px;color:#e2e2e2;transform:scaleX(0.9394);">1.00</div>
<div class="t" id="a0" style="left:875.5px;top:337.2px;padding-left:0.16px;font-size:8.7px;color:#fff;transform:scaleX(0.9480);-webkit-text-stroke:.32px #fff">$30.45</div>
<div class="t" id="c1" style="left:648.5px;top:370.2px;padding-left:0.97px;font-size:8.7px;color:#e2e2e2;transform:scaleX(0.9740);">2025-09-30</div>
<div class="t" id="n1" style="left:704.5px;top:370.2px;padding-left:0.66px;font-size:8.7px;color:#e2e2e2;transform:scaleX(0.9037);">Test task 02</div>
<div class="t" id="r1" style="left:759.5px;top:370.2px;padding-left:0.37px;font-size:8.7px;color:#e2e2e2;transform:scaleX(0.9518);">$30.45</div>
<div class="t" id="u1" style="left:801.5px;top:370.2px;padding-left:0.37px;font-size:8.5px;color:#e2e2e2;transform:scaleX(0.9685);">hour</div>
<div class="t" id="t1" style="left:848.5px;top:370.2px;padding-left:0.26px;font-size:8.7px;color:#e2e2e2;transform:scaleX(0.9394);">1.00</div>
<div class="t" id="a1" style="left:875.5px;top:370.2px;padding-left:0.16px;font-size:8.7px;color:#fff;transform:scaleX(0.9480);-webkit-text-stroke:.32px #fff">$30.45</div>
<div class="t" id="c2" style="left:648.5px;top:428.2px;padding-left:0.97px;font-size:8.7px;color:#e2e2e2;transform:scaleX(0.9740);">2025-10-21</div>
<div class="t" id="n2" style="left:704.5px;top:428.2px;padding-left:0.66px;font-size:8.7px;color:#e2e2e2;transform:scaleX(0.9037);">Test task 05</div>
<div class="t" id="r2" style="left:759.5px;top:428.2px;padding-left:0.37px;font-size:8.7px;color:#e2e2e2;transform:scaleX(0.9518);">$30.45</div>
<div class="t" id="u2" style="left:801.5px;top:428.2px;padding-left:0.37px;font-size:8.5px;color:#e2e2e2;transform:scaleX(0.9685);">hour</div>
<div class="t" id="t2" style="left:848.5px;top:428.2px;padding-left:0.26px;font-size:8.7px;color:#e2e2e2;transform:scaleX(0.9394);">0.67</div>
<div class="t" id="a2" style="left:875.5px;top:428.2px;padding-left:0.16px;font-size:8.7px;color:#fff;transform:scaleX(0.9480);-webkit-text-stroke:.32px #fff">$20.30</div>
<div class="t" id="c3" style="left:648.5px;top:461.2px;padding-left:0.97px;font-size:8.7px;color:#e2e2e2;transform:scaleX(0.9740);">2025-10-20</div>
<div class="t" id="n3" style="left:704.5px;top:461.2px;padding-left:0.66px;font-size:8.7px;color:#e2e2e2;transform:scaleX(0.9037);">Test task 06</div>
<div class="t" id="r3" style="left:759.5px;top:461.2px;padding-left:0.37px;font-size:8.7px;color:#e2e2e2;transform:scaleX(0.9518);">$30.45</div>
<div class="t" id="u3" style="left:801.5px;top:461.2px;padding-left:0.37px;font-size:8.5px;color:#e2e2e2;transform:scaleX(0.9685);">hour</div>
<div class="t" id="t3" style="left:848.5px;top:461.2px;padding-left:0.26px;font-size:8.7px;color:#e2e2e2;transform:scaleX(0.9394);">1.50</div>
<div class="t" id="a3" style="left:875.5px;top:461.2px;padding-left:0.16px;font-size:8.7px;color:#fff;transform:scaleX(0.9480);-webkit-text-stroke:.32px #fff">$45.68</div>
<div class="t" id="c4" style="left:648.5px;top:494.2px;padding-left:0.97px;font-size:8.7px;color:#e2e2e2;transform:scaleX(0.9740);">2025-10-07</div>
<div class="t" id="n4" style="left:704.5px;top:494.2px;padding-left:0.66px;font-size:8.7px;color:#e2e2e2;transform:scaleX(0.9037);">Test task 03</div>
<div class="t" id="r4" style="left:759.5px;top:494.2px;padding-left:0.37px;font-size:8.7px;color:#e2e2e2;transform:scaleX(0.9518);">$30.45</div>
<div class="t" id="u4" style="left:801.5px;top:494.2px;padding-left:0.37px;font-size:8.5px;color:#e2e2e2;transform:scaleX(0.9685);">hour</div>
<div class="t" id="t4" style="left:848.5px;top:494.2px;padding-left:0.26px;font-size:8.7px;color:#e2e2e2;transform:scaleX(0.9394);">0.50</div>
<div class="t" id="a4" style="left:875.5px;top:494.2px;padding-left:0.16px;font-size:8.7px;color:#fff;transform:scaleX(0.9480);-webkit-text-stroke:.32px #fff">$15.23</div>
<div class="t" id="c5" style="left:648.5px;top:526.2px;padding-left:0.97px;font-size:8.7px;color:#e2e2e2;transform:scaleX(0.9740);">2025-09-22</div>
<div class="t" id="n5" style="left:704.5px;top:526.2px;padding-left:0.64px;font-size:8.7px;color:#e2e2e2;transform:scaleX(0.9350);">Test 01</div>
<div class="t" id="r5" style="left:759.5px;top:526.2px;padding-left:0.37px;font-size:8.7px;color:#e2e2e2;transform:scaleX(0.9518);">$30.45</div>
<div class="t" id="u5" style="left:801.5px;top:526.2px;padding-left:0.37px;font-size:8.5px;color:#e2e2e2;transform:scaleX(0.9685);">hour</div>
<div class="t" id="t5" style="left:848.5px;top:526.2px;padding-left:0.26px;font-size:8.7px;color:#e2e2e2;transform:scaleX(0.9394);">1.00</div>
<div class="t" id="a5" style="left:875.5px;top:526.2px;padding-left:0.16px;font-size:8.7px;color:#fff;transform:scaleX(0.9480);-webkit-text-stroke:.32px #fff">$30.45</div>
<div class="t" id="d0" style="left:414.5px;top:332.2px;padding-left:0.46px;font-size:8.7px;color:#e2e2e2;transform:scaleX(0.9740);">2025-10-22</div>
<div class="t" id="s0" style="left:481.5px;top:338.2px;padding-left:0.92px;font-size:8.5px;color:#e2e2e2;transform:scaleX(0.9333);">Need confirmation</div>
<div class="t" id="d1" style="left:414.5px;top:423.2px;padding-left:0.46px;font-size:8.7px;color:#e2e2e2;transform:scaleX(0.9740);">2025-10-22</div>
<div class="t" id="s1" style="left:481.5px;top:428.2px;padding-left:0.92px;font-size:8.5px;color:#e2e2e2;transform:scaleX(0.9333);">Need confirmation</div>
<div class="t" id="st1" style="left:827.5px;top:398.2px;padding-left:0.89px;font-size:9.5px;color:#fff;transform:scaleX(0.9936);-webkit-text-stroke:.34px #fff">Subtotal:</div>
<div class="t" id="sv1" style="left:872.5px;top:398.2px;padding-left:0.28px;font-size:9.5px;color:#4db6ac;transform:scaleX(1.0274);">$60.90</div>
<div class="t" id="st2" style="left:822.5px;top:554.2px;padding-left:0.29px;font-size:9.5px;color:#fff;transform:scaleX(0.9936);-webkit-text-stroke:.34px #fff">Subtotal:</div>
<div class="t" id="sv2" style="left:867.5px;top:554.2px;padding-left:0.27px;font-size:9.5px;color:#4db6ac;transform:scaleX(1.0553);">$111.65</div>

</div>
<div id="winborder"></div>
</body></html>
